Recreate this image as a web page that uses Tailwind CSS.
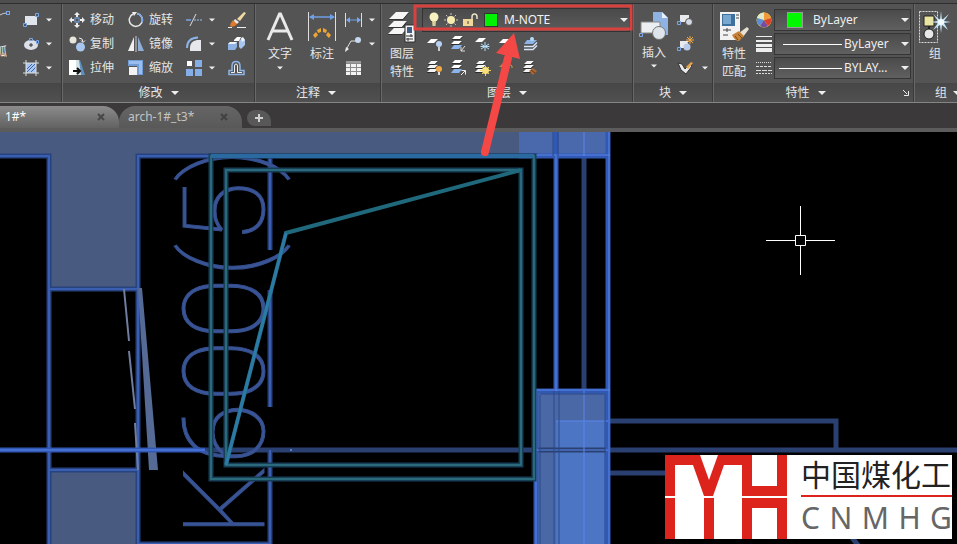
<!DOCTYPE html>
<html lang="zh-CN">
<head>
    <meta charset="UTF-8">
    <meta name="viewport" content="width=device-width, initial-scale=1.0">
    <title>arch-1#</title>
    <script src="https://cdn.jsdelivr.net/npm/@tailwindcss/browser@4"></script>
</head>
<body class="relative h-screen min-h-[400px] flex flex-col overflow-hidden bg-black text-xs text-[#e6e6e6] font-['Noto_Sans','Noto_Sans_CJK_SC',sans-serif]">
    <!-- Shared symbols -->
    <svg class="hidden">
        <symbol id="caret" viewBox="0 0 8 4"><path d="M0 0h8L4 4z" fill="#eee"/></symbol>
        <symbol id="sheets" viewBox="0 0 16 16">
            <path d="M4 1h7L8 4H1zM3 5h8L8 8H0zM3 9h8l-3 3H0z" fill="#f4f4f4"/>
            <path d="M1 4.500h7l3-3M0 8.500h8l3-3M0 12.500h8l3-3" fill="none" stroke="#2c2c2c"/>
        </symbol>
        <symbol id="sheets-blue" viewBox="0 0 16 16">
            <path d="M4 0h8L9 3H1zM3 5h8L8 8H0z" fill="#fff"/>
            <path d="M3 9h8l-3 4H0z" fill="#8db4e8"/>
            <path d="M1 3.500h8l3-3M0 8.500h8l3-3" fill="none" stroke="#2c2c2c"/>
        </symbol>
    </svg>

    <!-- Ribbon -->
    <header class="shrink-0 bg-[#545454]">
        <div class="h-1 bg-[#4e4e4e] border-b border-[#2e2e2e]"></div>
        <div class="flex border-b border-[#858585]">
            <!-- Draw -->
            <section class="w-[62px] shrink-0 flex flex-col border-r border-[#3a3a3a]">
                <div class="h-[79px] pt-1 flex">
                    <button class="w-[23px] h-full relative overflow-hidden" aria-label="圆弧">
                        <svg class="absolute top-0 left-0" width="12" height="14" viewBox="0 0 12 14"><path d="M0 7Q3 5 7 5" fill="none" stroke="#ccc"/><rect x="6.500" y="3.500" width="3" height="3" fill="#555" stroke="#7aa7e8"/></svg>
                        <span class="absolute top-9 -left-[5px]">弧</span>
                    </button>
                    <div class="flex flex-col">
                        <button class="h-6 flex items-center gap-[6px]" aria-label="矩形">
                            <svg width="17" height="16" viewBox="0 0 17 16"><rect x="2" y="4" width="12" height="9" fill="#e0e4ec"/><path d="M12.500 1.500h3v3h-3zM.500 11.500h3v3h-3z" fill="#4a5568" stroke="#7aa7e8"/></svg>
                            <svg width="6" height="4"><use href="#caret"/></svg>
                        </button>
                        <button class="h-6 flex items-center gap-[6px]" aria-label="椭圆">
                            <svg width="17" height="16" viewBox="0 0 17 16"><ellipse cx="8" cy="9" rx="7" ry="5" fill="#dce0e8"/><path d="M6 9h4M8 7v4" stroke="#333"/><path d="M6.500 2.500h3v2h-3zM13.500 4.500h2v3h-2z" fill="#555" stroke="#7aa7e8"/></svg>
                            <svg width="6" height="4"><use href="#caret"/></svg>
                        </button>
                        <button class="h-6 flex items-center gap-[6px]" aria-label="图案填充">
                            <svg width="17" height="16" viewBox="0 0 17 16"><rect x="3" y="3" width="10" height="10" fill="#a9c6f0"/><path d="M4 9l5-5M4 12l8-8M8 12l5-5" stroke="#3f67a8"/><path d="M0 3h16M0 13h16M3 0v16M13 0v16" stroke="#ddd"/></svg>
                            <svg width="6" height="4"><use href="#caret"/></svg>
                        </button>
                    </div>
                </div>
                <div class="h-[19px] bg-linear-to-b from-[#474747] to-[#505050]"></div>
            </section>

            <!-- Modify -->
            <section class="w-[193px] shrink-0 flex flex-col border-x border-l-[#686868] border-r-[#3a3a3a]">
                <div class="h-[79px] pt-1 pl-[6px] flex">
                    <div class="w-[59px] flex flex-col">
                        <button class="h-6 flex items-center gap-1">
                            <svg width="17" height="16" viewBox="0 0 17 16"><rect x="6" y="6" width="4" height="4" fill="#555" stroke="#7aa7e8"/><path d="M8 0l3 3H9v2H7V3H5zM8 16l3-3H9v-2H7v2H5zM0 8l3-3v2h2v2H3v2zM16 8l-3-3v2h-2v2h2v2z" fill="#eee"/></svg>
                            移动
                        </button>
                        <button class="h-6 flex items-center gap-1">
                            <svg width="17" height="16" viewBox="0 0 17 16"><circle cx="4" cy="4" r="3.500" fill="#e8e6dc"/><path d="M8 8h3v3H8z" fill="#9ab"/><circle cx="11.500" cy="11" r="4.500" fill="#a8c6ee"/><path d="M10 2q4 0 4 4M12 4.500l2 2 2-2" fill="none" stroke="#eee"/></svg>
                            复制
                        </button>
                        <button class="h-6 flex items-center gap-1">
                            <svg width="17" height="16" viewBox="0 0 17 16"><path d="M0 0h7v15H0z" fill="#fff"/><path d="M7 0h4l5 15H7z" fill="#5f8fc0"/><path d="M7 0h3l2 15H7z" fill="#d3e2e4"/><path d="M4 11h7M8 8l3 3-3 3" fill="none" stroke="#111" stroke-width="2"/></svg>
                            拉伸
                        </button>
                    </div>
                    <div class="w-[58px] flex flex-col">
                        <button class="h-6 flex items-center gap-1">
                            <svg width="17" height="16" viewBox="0 0 17 16"><path d="M5 2a6.500 6.500 0 1 0 4-.500" fill="none" stroke="#e6e6e6" stroke-width="1.500"/><path d="M9 1.500a6.500 6.500 0 0 1 5 9" fill="none" stroke="#7aa7e8" stroke-width="1.500"/><path d="M4 0h5L6 4z" fill="#eee"/></svg>
                            旋转
                        </button>
                        <button class="h-6 flex items-center gap-1">
                            <svg width="17" height="16" viewBox="0 0 17 16"><path d="M6 1v14H0z" fill="#f0f0f0"/><path d="M10 1v14h6z" fill="#8eaed8"/><path d="M8 0v16" stroke="#ccc"/></svg>
                            镜像
                        </button>
                        <button class="h-6 flex items-center gap-1">
                            <svg width="17" height="16" viewBox="0 0 17 16"><path d="M0 0h15v15H9V6H0z" fill="#6f9bd6"/><path d="M1 1h13v13h-3V4H1z" fill="#9bbdeb"/><rect x="1" y="7" width="8" height="8" fill="#f2f2f2"/></svg>
                            缩放
                        </button>
                    </div>
                    <div class="w-[40px] flex flex-col">
                        <button class="h-6 flex items-center gap-[6px]" aria-label="修剪">
                            <svg width="17" height="16" viewBox="0 0 17 16"><path d="M0 8h5" stroke="#7aa7e8" stroke-width="1.500"/><path d="M8 8h9" stroke="#9bbdeb" stroke-dasharray="2 1"/><path d="M4 14L10 2" stroke="#ddd"/></svg>
                            <svg width="6" height="4"><use href="#caret"/></svg>
                        </button>
                        <button class="h-6 flex items-center gap-[6px]" aria-label="圆角">
                            <svg width="17" height="16" viewBox="0 0 17 16"><path d="M4 15V12Q4 5 11 4h4v11z" fill="#e6e8ec"/><path d="M1 12Q1 2 12 1.500" fill="none" stroke="#8db4e8" stroke-width="2"/></svg>
                            <svg width="6" height="4"><use href="#caret"/></svg>
                        </button>
                        <button class="h-6 flex items-center gap-[6px]" aria-label="阵列">
                            <svg width="17" height="16" viewBox="0 0 17 16"><path d="M1 1h5v5H1z" fill="#fff"/><path d="M9 0h7v7H9zM0 9h7v7H0zM9 9h7v7H9z" fill="#86aee6"/></svg>
                            <svg width="6" height="4"><use href="#caret"/></svg>
                        </button>
                    </div>
                    <div class="pl-[2px] flex flex-col">
                        <button class="h-6 flex items-center" aria-label="删除">
                            <svg width="18" height="16" viewBox="0 0 18 16"><path d="M9 7l7-7 2 1-6 8z" fill="#f3d8a0"/><path d="M7 7l4 3-2 2-4-2z" fill="#e8e8e8"/><path d="M5 8l4 4q-3 4-7 2 1-4 3-6z" fill="#e07a2c"/><path d="M0 15.500h4M9 15.500h9" stroke="#eee"/></svg>
                        </button>
                        <button class="h-6 flex items-center" aria-label="分解">
                            <svg width="18" height="16" viewBox="0 0 18 16"><path d="M0 8l2-2h7v5l-2 3H0z" fill="#8eb2e2"/><path d="M0 8l2-2h7L7 8z" fill="#f0f2f6"/><path d="M6 4l3-3h4l-2 4H6z" fill="#fff"/><path d="M11 5l3-3 3 2v5l-4 4-2-2z" fill="#a8c6ee"/><path d="M13 2l2-1 2 3-3 2z" fill="#eef3fa"/></svg>
                        </button>
                        <button class="h-6 flex items-center" aria-label="偏移">
                            <svg width="18" height="16" viewBox="0 0 18 16" fill="none"><path d="M1 14.500h15v-4h-4V6q0-4.500-4-4.500T4 6v4.500H1z" stroke="#8db4e8" stroke-width="1.500"/><path d="M3 12.500h3.500V6Q6.500 4 8 4t1.500 2v6.500H14" stroke="#eee"/></svg>
                        </button>
                    </div>
                </div>
                <button class="h-[19px] flex items-center justify-center gap-2 bg-linear-to-b from-[#474747] to-[#505050]">修改<svg width="8" height="4"><use href="#caret"/></svg></button>
            </section>

            <!-- Annotate -->
            <section class="w-[126px] shrink-0 flex flex-col border-x border-l-[#686868] border-r-[#3a3a3a]">
                <div class="h-[79px] pt-1 pl-[3px] flex">
                    <button class="w-[42px] flex flex-col items-center">
                        <svg class="mt-1" width="28" height="30" viewBox="0 0 28 30"><path d="M2 28L13.500 2h1L26 28M6 19h16" fill="none" stroke="#e9e9e9" stroke-width="3"/></svg>
                        <span class="mt-1 leading-4">文字</span>
                        <svg class="mt-1" width="6" height="4"><use href="#caret"/></svg>
                    </button>
                    <button class="w-[42px] flex flex-col items-center">
                        <svg class="mt-1" width="28" height="30" viewBox="0 0 28 30"><path d="M.500 0v29M27.500 0v29" stroke="#ddd"/><path d="M2 5h24" stroke="#6f9fe6" stroke-width="1.500"/><path d="M1 5l5-3v6zM27 5l-5-3v6z" fill="#6f9fe6"/><path d="M5 23l3-3 2 3-3 3zM9 18l4-2v4l-3 1zM15 16l4 2-1 3-3-1zM20 20l3 3-2 3-3-3z" fill="#eda634"/></svg>
                        <span class="mt-1 leading-4">标注</span>
                    </button>
                    <div class="pl-[2px] flex flex-col">
                        <button class="h-6 flex items-center gap-[7px]" aria-label="线性">
                            <svg width="17" height="16" viewBox="0 0 17 16"><path d="M.500 1v14M16.500 1v14" stroke="#ddd"/><path d="M2 8h13" stroke="#6f9fe6"/><path d="M1 8l4-3v6zM16 8l-4-3v6z" fill="#7aa7e8"/></svg>
                            <svg width="6" height="4"><use href="#caret"/></svg>
                        </button>
                        <button class="h-6 flex items-center gap-[7px]" aria-label="引线">
                            <svg width="17" height="16" viewBox="0 0 17 16"><path d="M2 12L6 5h5" fill="none" stroke="#ddd"/><path d="M0 16l1-5 3 2z" fill="#eee"/><circle cx="13" cy="4" r="3" fill="#c8d8f0"/></svg>
                            <svg width="6" height="4"><use href="#caret"/></svg>
                        </button>
                        <button class="h-6 flex items-center" aria-label="表格">
                            <svg width="17" height="16" viewBox="0 0 17 16"><path d="M1 1h15v14H1z" fill="#f2f2f2"/><path d="M1 1h15v2H1z" fill="#999"/><path d="M1 7.500h15M1 11.500h15M1 3.500h15M5.500 3v12M11.500 3v12" stroke="#8a8a8a"/></svg>
                        </button>
                    </div>
                </div>
                <button class="h-[19px] pr-1 flex items-center justify-center gap-2 bg-linear-to-b from-[#474747] to-[#505050]">注释<svg width="8" height="4"><use href="#caret"/></svg></button>
            </section>

            <!-- Layers -->
            <section class="w-[252px] shrink-0 flex flex-col border-x border-l-[#686868] border-r-[#3a3a3a]">
                <div class="h-[79px] pt-1 flex">
                    <button class="w-10 flex flex-col items-center">
                        <svg class="mt-1" width="28" height="31" viewBox="0 0 28 31"><path d="M8 0h13l-6 7H1zM6 9h13l-5 6H0zM6 16h13l-5 6H0z" fill="#f6f6f6"/><path d="M1 7.500h14l6-7M0 15.500h14l5-6M0 22.500h14" fill="none" stroke="#333"/><path d="M17 13h10v17H17z" fill="#f4f4f4" stroke="#2c2c2c"/><path d="M19 15h5v6h-5z" fill="#3f5f86"/><path d="M18 24h7M18 27h7M23 22v3M20 26v3" stroke="#333"/></svg>
                        <span class="mt-[2px] leading-[18px]">图层<br>特性</span>
                    </button>
                    <div class="flex-1 flex flex-col">
                        <div class="h-6 mr-[2px] flex items-center pl-[6px] gap-1 border border-[#333] bg-linear-to-b from-[#4a4a4a] to-[#5c5c5c]">
                            <svg width="10" height="16" viewBox="0 0 10 16"><circle cx="5" cy="5" r="4.500" fill="#f8f2c0"/><path d="M3 9h4l-.500 5h-3z" fill="#d8cf9a"/></svg>
                            <svg width="16" height="16" viewBox="0 0 16 16"><path d="M8 1v14M1 8h14M3 3l10 10M13 3L3 13" stroke="#c8c8c0" stroke-dasharray="2 1"/><circle cx="8" cy="8" r="4" fill="#f6ecb0"/></svg>
                            <svg width="15" height="14" viewBox="0 0 15 14"><path d="M9 6V4q0-3 2.500-3T14 4v2" fill="none" stroke="#e8e0c8" stroke-width="1.500"/><path d="M0 6h10v7H0z" fill="#f1d79a"/><path d="M5 8v3" stroke="#444"/></svg>
                            <span class="w-[14px] h-[14px] ml-[2px] bg-[#00f200] border border-[#333]"></span>
                            <div class="relative flex-1 flex items-center">
                                <select aria-label="图层" class="appearance-none w-full pl-[2px] bg-transparent text-xs text-[#f2f2f2] outline-none"><option>M-NOTE</option></select>
                                <svg class="absolute right-[1px] pointer-events-none" width="8" height="4"><use href="#caret"/></svg>
                            </div>
                        </div>
                        <div class="h-6 flex items-center gap-2 pl-[5px]">
                            <button aria-label="关闭图层"><svg width="16" height="16" viewBox="0 0 16 16"><path d="M4 3h7L7 7H0z" fill="#fff"/><circle cx="12" cy="8" r="3" fill="#b8d0f2"/><path d="M12 11v4" stroke="#ccc" stroke-width="2"/></svg></button>
                            <button aria-label="图层隔离"><svg width="16" height="16" viewBox="0 0 16 16"><use href="#sheets-blue"/><path d="M14 10l-4 5M10 11v4h4" fill="none" stroke="#ddd"/></svg></button>
                            <button aria-label="冻结图层"><svg width="16" height="16" viewBox="0 0 16 16"><path d="M4 2h7L7 6H0z" fill="#fff"/><path d="M10 6v9M6 8l8 5M14 8l-8 5M5.500 10.500h9" stroke="#b5dcf5"/></svg></button>
                            <button aria-label="锁定图层"><svg width="16" height="16" viewBox="0 0 16 16"><path d="M4 3h7L7 7H0z" fill="#fff"/></svg></button>
                            <button aria-label="置为当前"><svg width="16" height="16" viewBox="0 0 16 16"><path d="M4 4h10l-4 4H1z" fill="#8db4e8"/><circle cx="9" cy="3" r="2" fill="#b5dcf5"/><path d="M1 10.500h9l4-4M1 13.500h9l4-4" fill="none" stroke="#d5e3f6" stroke-width="1.500"/></svg></button>
                        </div>
                        <div class="h-6 flex items-center gap-2 pl-[5px]">
                            <button aria-label="打开所有图层"><svg width="16" height="16" viewBox="0 0 16 16"><use href="#sheets"/><circle cx="12" cy="9" r="3" fill="#f0a94a"/><path d="M12 12v3" stroke="#ddd" stroke-width="2"/></svg></button>
                            <button aria-label="取消隔离"><svg width="16" height="16" viewBox="0 0 16 16"><use href="#sheets-blue"/><path d="M10 15l4-4M10.500 10.500h4v4" fill="none" stroke="#eee"/></svg></button>
                            <button aria-label="解冻所有图层"><svg width="16" height="16" viewBox="0 0 16 16"><use href="#sheets"/><path d="M10.500 6v10M5 10.500h11M7 7l7 7M14 7l-7 7" stroke="#f0d060"/><circle cx="10.500" cy="10.500" r="3.500" fill="#f7e07c"/></svg></button>
                            <button aria-label="解锁图层"><svg width="16" height="16" viewBox="0 0 16 16"><path d="M4 3h7L7 7H0z" fill="#b98a40"/><path d="M9 8V6q2-3 4 0v2" fill="none" stroke="#d39a3c"/></svg></button>
                            <button aria-label="匹配图层"><svg width="16" height="16" viewBox="0 0 16 16"><use href="#sheets"/><path d="M6 11l4-3 4 3-4 4z" fill="#a8683a"/><path d="M8 10l4 3" stroke="#6a3a18"/></svg></button>
                        </div>
                    </div>
                </div>
                <button class="h-[19px] flex items-center justify-center gap-2 bg-linear-to-b from-[#474747] to-[#505050]">图层<svg width="8" height="4"><use href="#caret"/></svg></button>
            </section>

            <!-- Block -->
            <section class="w-[80px] shrink-0 flex flex-col border-x border-l-[#686868] border-r-[#3a3a3a]">
                <div class="h-[79px] pt-1 flex">
                    <button class="w-10 flex flex-col items-center">
                        <svg class="mt-[3px]" width="30" height="30" viewBox="0 0 30 30"><path d="M14 1h9l6 6v17H14z" fill="#8eb2e2"/><path d="M23 1v6h6z" fill="#e6eefb"/><path d="M2 11h19v11H2z" fill="#eceef2" stroke="#888"/><path d="M.500 22.500h3v3h-3z" fill="#555" stroke="#7aa7e8"/><circle cx="20" cy="22" r="6.500" fill="#dfe3ea" stroke="#777"/></svg>
                        <span class="mt-1 leading-4">插入</span>
                        <svg class="mt-[3px]" width="6" height="4"><use href="#caret"/></svg>
                    </button>
                    <div class="pl-[3px] flex flex-col">
                        <button class="h-6 flex items-center" aria-label="创建块"><svg width="17" height="16" viewBox="0 0 17 16"><path d="M3 3h9v7H3z" fill="#e8eaee"/><path d="M.500 9.500h3v3h-3z" fill="#555" stroke="#7aa7e8"/><circle cx="12" cy="10" r="3.500" fill="#d5dae4" stroke="#555"/></svg></button>
                        <button class="h-6 flex items-center" aria-label="编辑块"><svg width="17" height="16" viewBox="0 0 17 16"><path d="M3 5h8v7H3z" fill="#e8eaee"/><path d="M.500 11.500h3v3h-3z" fill="#555" stroke="#7aa7e8"/><circle cx="10" cy="11" r="3.500" fill="#b8cbe8"/><path d="M13 0v8M9 4h8M10 1l6 6M16 1l-6 6" stroke="#f0a94a"/></svg></button>
                        <button class="h-6 flex items-center gap-2" aria-label="编辑属性"><svg width="17" height="16" viewBox="0 0 17 16"><path d="M1 3l4 1 3 5 5-5 2 2-6 8-5-4z" fill="#e8e8e8" stroke="#333"/><path d="M9 7l5-5 2 1-5 6z" fill="#e8a24a"/></svg><svg width="6" height="4"><use href="#caret"/></svg></button>
                    </div>
                </div>
                <button class="h-[19px] flex items-center justify-center gap-2 bg-linear-to-b from-[#474747] to-[#505050]">块<svg width="8" height="4"><use href="#caret"/></svg></button>
            </section>

            <!-- Properties -->
            <section class="w-[201px] shrink-0 flex flex-col border-x border-l-[#686868] border-r-[#3a3a3a]">
                <div class="h-[79px] pt-1 flex">
                    <button class="w-10 flex flex-col items-center">
                        <svg class="mt-1" width="30" height="31" viewBox="0 0 30 31"><path d="M1 0h20v28H1z" fill="#f2f2f2"/><path d="M3 2h13v12H3z" fill="#3f6f9c"/><path d="M4 3h8v9H4z" fill="#78a8d0"/><path d="M17 3h3M17 6h3M4 18h8M4 23h5M8 16v4" stroke="#444"/><path d="M20 21l8-6 2 2-6 8z" fill="#e9e2d4"/><path d="M13 23l7-4 5 5-5 5q-4 0-7-6z" fill="#c68236"/><path d="M16 24l3 4M19 22l4 4" stroke="#7a4a18"/></svg>
                        <span class="mt-[2px] leading-[18px]">特性<br>匹配</span>
                    </button>
                    <div class="w-5 pl-[2px] flex flex-col">
                        <button class="h-6 flex items-center" aria-label="对象颜色"><svg width="16" height="16" viewBox="0 0 16 16"><circle cx="8" cy="8" r="7.500" fill="#e8e060"/><path d="M8 8V.500A7.500 7.500 0 0 0 1 6z" fill="#dfe8c8"/><path d="M8 8L1 6a7.500 7.500 0 0 0 3 8z" fill="#5b8ed6"/><path d="M8 8l-4 6a7.500 7.500 0 0 0 8 0z" fill="#7a4aa0"/><path d="M8 8l4 6a7.500 7.500 0 0 0 3-8z" fill="#d8432c"/><path d="M8 8l7-2A7.500 7.500 0 0 0 8 .500z" fill="#f09a3c"/></svg></button>
                        <button class="h-6 flex items-center" aria-label="线宽"><svg width="16" height="16" viewBox="0 0 16 16"><path d="M0 0h16v1H0zM0 4h16v2H0zM0 8h16v3H0zM0 12h16v4H0z" fill="#eee"/></svg></button>
                        <button class="h-6 flex items-center" aria-label="线型"><svg width="16" height="16" viewBox="0 0 16 16"><path d="M0 2.500h16" stroke="#ddd" stroke-dasharray="1 1"/><path d="M0 6.500h16" stroke="#ddd" stroke-dasharray="3 1"/><path d="M0 10.500h16" stroke="#ddd" stroke-dasharray="5 1"/><path d="M0 13.500h16" stroke="#ddd" stroke-dasharray="2 1"/></svg></button>
                    </div>
                    <div class="flex-1 pt-px pr-[2px] flex flex-col gap-[2px]">
                        <div class="relative h-[22px] flex items-center border border-[#353535] bg-linear-to-b from-[#4b4b4b] to-[#606060] pl-3">
                            <span class="w-4 h-4 bg-[#00f800] border border-[#9a9a9a]"></span>
                            <select aria-label="颜色" class="appearance-none flex-1 pl-[10px] bg-transparent text-xs text-[#eee] outline-none"><option>ByLayer</option></select>
                            <svg class="absolute right-[1px] pointer-events-none" width="8" height="4"><use href="#caret"/></svg>
                        </div>
                        <div class="relative h-[22px] flex items-center border border-[#353535] bg-linear-to-b from-[#4b4b4b] to-[#606060] pl-2">
                            <span class="w-[59px] h-px bg-white"></span>
                            <select aria-label="线宽值" class="appearance-none flex-1 min-w-0 pl-[2px] bg-transparent text-xs text-[#eee] outline-none"><option>ByLayer</option></select>
                            <svg class="absolute right-[1px] pointer-events-none" width="8" height="4"><use href="#caret"/></svg>
                        </div>
                        <div class="relative h-[22px] flex items-center border border-[#353535] bg-linear-to-b from-[#4b4b4b] to-[#606060] pl-1">
                            <span class="w-[63px] h-px bg-white"></span>
                            <select aria-label="线型值" class="appearance-none flex-1 min-w-0 pl-[2px] bg-transparent text-xs text-[#eee] outline-none"><option>BYLAY...</option></select>
                            <svg class="absolute right-[1px] pointer-events-none" width="8" height="4"><use href="#caret"/></svg>
                        </div>
                    </div>
                </div>
                <div class="relative h-[19px] flex items-center justify-center bg-linear-to-b from-[#474747] to-[#505050]">
                    <button class="flex items-center gap-2 pr-4">特性<svg width="8" height="4"><use href="#caret"/></svg></button>
                    <button class="absolute right-1" aria-label="特性设置"><svg width="6" height="6" viewBox="0 0 6 6"><path d="M0 0l4 4M5.500 1v4.500H1" fill="none" stroke="#eee"/></svg></button>
                </div>
            </section>

            <!-- Group -->
            <section class="flex-1 min-w-0 overflow-hidden flex flex-col border-l border-[#686868]">
                <div class="h-[79px] pt-1 pl-1 flex">
                    <button class="w-8 flex flex-col items-center">
                        <svg class="mt-[3px] shrink-0" width="32" height="32" viewBox="0 0 32 32"><path d="M.500.500h18v31H.500z" fill="none" stroke="#ddd" stroke-dasharray="2 1"/><path d="M5 5h10v10H5z" fill="#e9e4a0" stroke="#222"/><circle cx="10" cy="23" r="5" fill="#e8e8e8" stroke="#222"/><path d="M10 15v3" stroke="#222" stroke-width="2"/><path d="M22 0l1 9 7-6-5 7 7 1-7 1 4 7-6-5-1 8-1-8-7 5 5-7-8-1 8-1-5-7 7 6z" fill="#c4e4fa"/><circle cx="22" cy="11" r="3" fill="#f2faff"/></svg>
                        <span class="mt-[3px] leading-4">组</span>
                    </button>
                </div>
                <button class="h-[19px] pl-5 flex items-center gap-[6px] bg-linear-to-b from-[#474747] to-[#505050]">组<svg class="shrink-0" width="8" height="4"><use href="#caret"/></svg></button>
            </section>
        </div>
    </header>

    <!-- Drawing tabs -->
    <nav class="shrink-0 h-[29px] flex items-end bg-[#3b393a] border-b-4 border-[#5c5c5c] font-['Noto_Sans','Open_Sans',sans-serif]">
        <div class="relative z-10 w-[119px] h-[22px] flex items-center justify-between pl-[5px] pr-[14px] rounded-tr-2xl bg-linear-to-b from-[#8c8c8c] to-[#626262]">
            <button class="text-xs text-white">1#*</button>
            <button aria-label="关闭 1#"><svg width="8" height="8" viewBox="0 0 8 8"><path d="M1 1l6 6M7 1L1 7" stroke="#474747" stroke-width="2"/></svg></button>
        </div>
        <div class="w-[123px] h-[22px] flex items-center justify-between pl-[9px] pr-[14px] rounded-t-2xl bg-linear-to-b from-[#656565] to-[#595959]">
            <button class="text-xs text-[#c4c4c4]">arch-1#_t3*</button>
            <button aria-label="关闭 arch-1#_t3"><svg width="8" height="8" viewBox="0 0 8 8"><path d="M1 1l6 6M7 1L1 7" stroke="#424242" stroke-width="2"/></svg></button>
        </div>
        <button class="w-6 h-4 mb-[2px] ml-[5px] flex items-center justify-center rounded-tr-xl rounded-l-lg bg-[#585858]" aria-label="新建图形">
            <svg width="8" height="8" viewBox="0 0 8 8"><path d="M4 0v8M0 4h8" stroke="#d0d0d0" stroke-width="2"/></svg>
        </button>
    </nav>

    <!-- Model space -->
    <main class="relative flex-1 min-h-0 overflow-hidden bg-black">
        <svg class="block w-full h-full" viewBox="0 132 957 412" preserveAspectRatio="xMinYMin slice" fill="none">
            <!-- wall fills -->
            <path d="M0 132h610v24H138v132H48V156H0zM48 470h90v74H48z" fill="#495a80"/>
            <path d="M519 132h91v24h-91z" fill="#4a69ac"/>
            <path d="M534 391h75v153h-75z" fill="#4a68a5"/>
            <path d="M556 421h52v123h-52z" fill="#4c75c4"/>

            <!-- dim lines -->
            <g stroke="#2a4070" stroke-width="5">
                <path d="M584 156v235M205 450h752M610 421h226v30M610 473h60M835 516l26 33"/>
            </g>
            <g stroke="#26437f" stroke-width="5">
                <path id="walls" d="M0 156h49v388M138 544V156h400M49 289h89M49 470h89M138 544h132M270 156v94M270 290v117M270 450v94"/>
            </g>
            <use href="#walls" stroke="#3a5fb2" stroke-width="2"/>

            <!-- room label -->
            <text transform="translate(264 537) rotate(-90)" font-family="Roboto, Lato, sans-serif" font-weight="100" font-size="114" fill="#3a5496" stroke="#34508f" stroke-width="1">K600(5)</text>

            <!-- door leaf -->
            <path d="M138 288h4l16 182h-9z" fill="#566a96"/>
            <path d="M124 289l5 52M129 351l6 58M135 423l3 47" stroke="#6f7da0" stroke-width="2"/>

            <!-- columns on the right -->
            <g stroke="#3159b4" stroke-width="5">
                <path d="M556 132v259M608 132v412M519 156h91M534 391h76M0 450h205M536 391v153"/>
            </g>
            <g stroke="#5a86ec" stroke-width="1">
                <path d="M556 156v235M609 132v412M519 155h91M534 390h76M0 450h205M584 391v153M584 132v24M536 391v153M536 450h72M556 421h52"/>
            </g>
            <path d="M553 132v24M558 132v24M554 391v153M559 391v153M540 395v149M605 395v149M540 394h66" stroke="#2b4888"/>

            <!-- shaft outline -->
            <g stroke="#183f58" stroke-width="5">
                <path id="shaft" d="M534 156H211v323h323zM521 170H226v295h295z"/>
            </g>
            <use href="#shaft" stroke="#2a6a7a" stroke-width="2"/>
            <path d="M211 156h323" stroke="#2a6aa0" stroke-width="4"/>
            <path d="M521 170l-235 63-60 232" stroke="#20687c" stroke-width="4"/>
            <path d="M286 233l-60 232" stroke="#2c7aa6" stroke-width="3"/>
            <circle cx="291" cy="450" r="1" fill="#6a96e8"/>

            <!-- crosshair -->
            <path d="M800.500 206v29M800.500 246v29M766 240.500h29M806 240.500h29M795.500 235.500h10v10h-10z" stroke="#fff"/>
        </svg>

        <!-- Company badge -->
        <div class="absolute right-[5px] bottom-[5px] w-[287px] h-[84px] flex overflow-hidden bg-white">
            <svg class="shrink-0" width="122" height="84" viewBox="0 0 122 84">
                <path d="M0 0h35l9 25 9-25h34v31h25V0h10v41H77V10H59L48 41H39L28 10H10v31H0zM0 43h10v41H0zM39 43h10v41H39zM77 43h45v41h-10V53H87v31H77z" fill="#dc241c"/>
            </svg>
            <div class="flex-1 min-w-0 pl-[14px] whitespace-nowrap">
                <p class="h-[42px] leading-9 border-b-2 border-[#dc241c] text-[30px] text-[#222] font-['Noto_Sans_CJK_SC',sans-serif]">中国煤化工</p>
                <p class="flex justify-between leading-[42px] text-[30px] text-[#666] font-['Noto_Sans','Open_Sans',sans-serif]"><span>C</span><span>N</span><span>M</span><span>H</span><span>G</span></p>
            </div>
        </div>
    </main>

    <!-- Callout over the layer list -->
    <svg class="absolute top-0 left-0 pointer-events-none" width="640" height="160" viewBox="0 0 640 160">
        <rect x="415" y="6" width="216" height="23" fill="none" stroke="#d9413f" stroke-width="3"/>
        <path d="M485 152L508 58" stroke="#f34846" stroke-width="8" stroke-linecap="round"/>
        <path d="M514 33l6 26-24-6z" fill="#f34846"/>
    </svg>
</body>
</html>
